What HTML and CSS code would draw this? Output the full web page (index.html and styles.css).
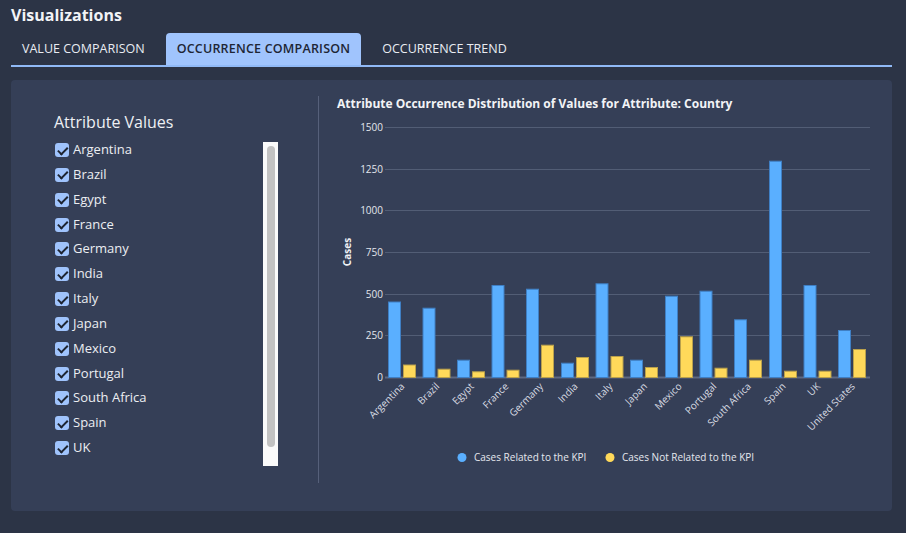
FILE: index.html
```html
<!DOCTYPE html>
<html>
<head>
<meta charset="utf-8">
<link rel="stylesheet" href="styles.css">
</head>
<body>
<header class="header">
  <h1 class="title">Visualizations</h1>
  <nav class="tabs">
    <div class="tab">VALUE COMPARISON</div>
    <div class="tab active">OCCURRENCE COMPARISON</div>
    <div class="tab">OCCURRENCE TREND</div>
  </nav>
</header>
<main class="panel">
  <section class="left">
    <h2 class="attr-title">Attribute Values</h2>
    <div class="listbox">
      <ul class="list">
        <li class="row"><span class="cb"></span><span class="lbl">Argentina</span></li>
        <li class="row"><span class="cb"></span><span class="lbl">Brazil</span></li>
        <li class="row"><span class="cb"></span><span class="lbl">Egypt</span></li>
        <li class="row"><span class="cb"></span><span class="lbl">France</span></li>
        <li class="row"><span class="cb"></span><span class="lbl">Germany</span></li>
        <li class="row"><span class="cb"></span><span class="lbl">India</span></li>
        <li class="row"><span class="cb"></span><span class="lbl">Italy</span></li>
        <li class="row"><span class="cb"></span><span class="lbl">Japan</span></li>
        <li class="row"><span class="cb"></span><span class="lbl">Mexico</span></li>
        <li class="row"><span class="cb"></span><span class="lbl">Portugal</span></li>
        <li class="row"><span class="cb"></span><span class="lbl">South Africa</span></li>
        <li class="row"><span class="cb"></span><span class="lbl">Spain</span></li>
        <li class="row"><span class="cb"></span><span class="lbl">UK</span></li>
        <li class="row"><span class="cb"></span><span class="lbl">United States</span></li>
      </ul>
      <div class="scrollbar"><div class="thumb"></div></div>
    </div>
  </section>
  <section class="right">
    <svg class="chart" width="573" height="387" viewBox="0 0 573 387">
      <text class="chart-title" x="18" y="12">Attribute Occurrence Distribution of Values for Attribute: Country</text>
      <g class="grid">
        <line x1="66" y1="31.5" x2="551" y2="31.5"/>
        <line x1="66" y1="73.5" x2="551" y2="73.5"/>
        <line x1="66" y1="114.5" x2="551" y2="114.5"/>
        <line x1="66" y1="156.5" x2="551" y2="156.5"/>
        <line x1="66" y1="198.5" x2="551" y2="198.5"/>
        <line x1="66" y1="239.5" x2="551" y2="239.5"/>
        <line class="axis" x1="66" y1="281.5" x2="551" y2="281.5"/>
      </g>
      <g class="ylab">
        <text x="64" y="35">1500</text>
        <text x="64" y="77">1250</text>
        <text x="64" y="118">1000</text>
        <text x="64" y="160">750</text>
        <text x="64" y="202">500</text>
        <text x="64" y="243">250</text>
        <text x="64" y="285">0</text>
      </g>
      <text class="yaxis-title" transform="translate(32,156) rotate(-90)">Cases</text>
      <g class="blue">
        <rect x="69.5" y="206" width="12" height="75.5"/>
        <rect x="104" y="212.2" width="12" height="69.3"/>
        <rect x="138.5" y="264.2" width="12" height="17.3"/>
        <rect x="173" y="189.5" width="12" height="92"/>
        <rect x="207.5" y="193.2" width="12" height="88.3"/>
        <rect x="242.5" y="267.2" width="12" height="14.3"/>
        <rect x="277" y="187.8" width="12" height="93.7"/>
        <rect x="311.5" y="264.2" width="12" height="17.3"/>
        <rect x="346.5" y="200.2" width="12" height="81.3"/>
        <rect x="381" y="195.2" width="12" height="86.3"/>
        <rect x="415.5" y="223.8" width="12" height="57.7"/>
        <rect x="450.5" y="65.2" width="12" height="216.3"/>
        <rect x="485" y="189.5" width="12" height="92"/>
        <rect x="519.5" y="234.5" width="12" height="47"/>
      </g>
      <g class="yellow">
        <rect x="84.5" y="269" width="12" height="12.5"/>
        <rect x="119" y="273.2" width="12" height="8.3"/>
        <rect x="153.5" y="275.8" width="12" height="5.7"/>
        <rect x="188" y="274.2" width="12" height="7.3"/>
        <rect x="222.5" y="249.2" width="12" height="32.3"/>
        <rect x="257.5" y="261.5" width="12" height="20"/>
        <rect x="292" y="260.5" width="12" height="21"/>
        <rect x="326.5" y="271.5" width="12" height="10"/>
        <rect x="361.5" y="240.8" width="12" height="40.7"/>
        <rect x="396" y="272.2" width="12" height="9.3"/>
        <rect x="430.5" y="264.2" width="12" height="17.3"/>
        <rect x="465.5" y="275.2" width="12" height="6.3"/>
        <rect x="500" y="275.2" width="12" height="6.3"/>
        <rect x="534.5" y="253.5" width="12" height="28"/>
      </g>
      <g class="xlab">
        <text transform="translate(86.3,291) rotate(-45)">Argentina</text>
        <text transform="translate(121,291) rotate(-45)">Brazil</text>
        <text transform="translate(155.6,291) rotate(-45)">Egypt</text>
        <text transform="translate(190.2,291) rotate(-45)">France</text>
        <text transform="translate(224.9,291) rotate(-45)">Germany</text>
        <text transform="translate(259.5,291) rotate(-45)">India</text>
        <text transform="translate(294.2,291) rotate(-45)">Italy</text>
        <text transform="translate(328.8,291) rotate(-45)">Japan</text>
        <text transform="translate(363.4,291) rotate(-45)">Mexico</text>
        <text transform="translate(398.1,291) rotate(-45)">Portugal</text>
        <text transform="translate(432.7,291) rotate(-45)">South Africa</text>
        <text transform="translate(467.4,291) rotate(-45)">Spain</text>
        <text transform="translate(502,291) rotate(-45)">UK</text>
        <text transform="translate(536.6,291) rotate(-45)">United States</text>
      </g>
      <g class="legend">
        <circle cx="143" cy="361.5" r="4.5" class="dot-blue"/>
        <text x="155" y="365">Cases Related to the KPI</text>
        <circle cx="291" cy="361.5" r="4.5" class="dot-yellow"/>
        <text x="303" y="365">Cases Not Related to the KPI</text>
      </g>
    </svg>
  </section>
</main>
</body>
</html>
```
FILE: styles.css
```css
* { box-sizing: border-box; }
html, body {
  margin: 0;
  padding: 0;
}
body {
  width: 906px;
  height: 533px;
  overflow: hidden;
  background: #2c3446;
  font-family: "Open Sans", "Noto Sans", sans-serif;
  color: #eef0f4;
}
.header {
  padding: 5px 14px 0 11px;
}
.title {
  margin: 0;
  font-size: 16px;
  line-height: 20px;
  font-weight: 700;
  color: #f2f3f6;
}
.tabs {
  margin-top: 8px;
  display: flex;
  gap: 10px;
  border-bottom: 2px solid #90b9f6;
}
.tab {
  height: 32px;
  line-height: 32px;
  padding: 0 11px;
  font-size: 12.5px;
  color: #e9ecf2;
  border-radius: 4px 4px 0 0;
}
.tab.active {
  background: #a0c4fd;
  color: #1e2635;
  font-weight: 600;
  letter-spacing: 0.2px;
}
.panel {
  display: flex;
  margin: 13px 14px 0 11px;
  height: 431px;
  padding: 16px 0 28px;
  background: #353f57;
  border-radius: 4px;
}
.left {
  width: 307px;
  flex: none;
  padding: 16px 0 0 43px;
}
.attr-title {
  margin: 0;
  font-size: 16px;
  line-height: 20px;
  font-weight: 400;
  color: #eef0f4;
}
.listbox {
  margin-top: 10px;
  width: 224px;
  height: 324px;
  display: flex;
}
.list {
  list-style: none;
  margin: 0;
  padding: 0;
  flex: 1;
  overflow: hidden;
}
.row {
  height: 24.85px;
  display: flex;
  align-items: flex-start;
  gap: 4px;
}
.cb {
  position: relative;
  flex: none;
  width: 14px;
  height: 14px;
  margin: 1px 0 0 1px;
  border-radius: 3px;
  background: #9fc3fc;
}
.cb::after {
  content: "";
  position: absolute;
  left: 4.5px;
  top: 1.5px;
  width: 4px;
  height: 7.5px;
  border: solid #1d2431;
  border-width: 0 2px 2px 0;
  transform: rotate(45deg);
}
.lbl {
  font-size: 13px;
  line-height: 14px;
  color: #eceef2;
}
.scrollbar {
  width: 15px;
  flex: none;
  background: #fafafa;
  padding: 4px 3px 19px 4px;
}
.thumb {
  height: 100%;
  border-radius: 4px;
  background: #c2c2c2;
}
.right {
  flex: 1;
  border-left: 1px solid #56607a;
}
.chart {
  display: block;
  font-family: "Open Sans", "Noto Sans", sans-serif;
}
.chart-title {
  font-size: 12px;
  font-weight: 700;
  fill: #f2f3f6;
}
.grid line {
  stroke: #525d75;
  stroke-width: 1;
}
.grid line.axis {
  stroke: #5e6982;
  stroke-width: 2;
}
.ylab text {
  font-size: 10px;
  fill: #e3e6ec;
  text-anchor: end;
}
.yaxis-title {
  font-size: 10px;
  font-weight: 700;
  fill: #eef0f4;
  text-anchor: middle;
}
.blue rect {
  fill: #5aafff;
  stroke: #3f7fc4;
  stroke-width: 1;
}
.yellow rect {
  fill: #ffd95a;
  stroke: #b9a04c;
  stroke-width: 1;
}
.xlab text {
  font-size: 10px;
  fill: #dadde4;
  text-anchor: end;
}
.legend text {
  font-size: 10px;
  fill: #e6e8ee;
}
.dot-blue { fill: #5aafff; }
.dot-yellow { fill: #ffd95a; }
```
